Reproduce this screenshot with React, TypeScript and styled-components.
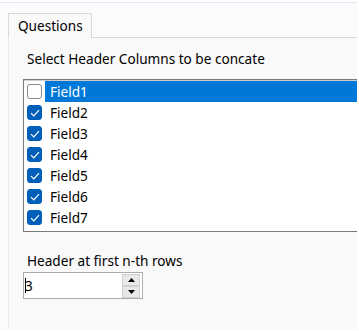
import React from "react";
import styled, { createGlobalStyle } from "styled-components";

const GlobalStyle = createGlobalStyle`
  body {
    margin: 0;
    background: #ffffff;
    font-family: "Noto Sans", "Open Sans", sans-serif;
  }
`;

const Screen = styled.div`
  width: 359px;
  height: 331px;
  overflow: hidden;
  background: #ffffff;
`;

const Window = styled.div`
  width: 357px;
  height: 327px;
  margin-top: 2px;
  border-top: 1px solid #e1e6ee;
  background: #fafbfd;
  display: flex;
  flex-direction: column;
`;

const TabStrip = styled.div`
  height: 34px;
  padding-left: 8px;
  display: flex;
  align-items: flex-end;
  position: relative;
  z-index: 1;
`;

const Tab = styled.div`
  box-sizing: border-box;
  width: 84px;
  height: 25px;
  margin-bottom: -1px;
  padding-left: 9px;
  border: 1px solid #d9d9d9;
  border-bottom: none;
  background: #f9f9f9;
  font-size: 13.6px;
  line-height: 23px;
  color: #000;
`;

const Panel = styled.div`
  flex: 1;
  margin-left: 8px;
  margin-bottom: 2px;
  border-top: 1px solid #d9d9d9;
  border-left: 1px solid #ececec;
  background: #f9f9f9;
  padding: 12px 0 0 14px;
  overflow: hidden;
  display: flex;
  flex-direction: column;
`;

const Label = styled.div<{ $top?: number }>`
  margin-left: 4px;
  margin-top: ${(p) => p.$top || 0}px;
  font-size: 13.6px;
  line-height: 18px;
  color: #000;
  white-space: nowrap;
`;

const ListBox = styled.div`
  box-sizing: border-box;
  width: 345px;
  height: 153px;
  margin-top: 11px;
  padding-top: 1px;
  border: 1px solid #7a7a7a;
  box-shadow: inset 0 1px 0 #cfcfcf;
  background: #ffffff;
  flex-shrink: 0;
`;

const Row = styled.div`
  height: 21px;
  display: flex;
  align-items: center;
`;

const Box = styled.div<{ $checked: boolean }>`
  box-sizing: border-box;
  width: 15px;
  height: 15px;
  margin-left: 3px;
  border-radius: 3px;
  border: 1px solid ${(p) => (p.$checked ? "#005fb8" : "#8a8a8a")};
  background: ${(p) => (p.$checked ? "#005fb8" : "#fdfdfd")};
  display: flex;
  align-items: center;
  justify-content: center;
`;

const ItemText = styled.div<{ $selected: boolean }>`
  flex: 1;
  height: 21px;
  margin-left: 3px;
  padding-left: 5px;
  font-size: 13.6px;
  line-height: 21px;
  color: ${(p) => (p.$selected ? "#ffffff" : "#000000")};
  background: ${(p) => (p.$selected ? "#0078d7" : "transparent")};
`;

const SpinBox = styled.div`
  box-sizing: border-box;
  width: 120px;
  height: 27px;
  margin-top: 2px;
  border: 1px solid #acacac;
  background: #ffffff;
  display: flex;
  align-items: center;
  padding: 1px 2px 1px 1px;
`;

const SpinValue = styled.div`
  flex: 1;
  display: flex;
  align-items: center;
  font-size: 13.6px;
  color: #000;
`;

const Caret = styled.span`
  width: 1px;
  height: 15px;
  background: #000;
  margin-right: -1px;
`;

const SpinButtons = styled.div`
  width: 18px;
  height: 24px;
  display: flex;
  flex-direction: column;
`;

const SpinButton = styled.div`
  box-sizing: border-box;
  flex: 1;
  border: 1px solid #d0d0d0;
  background: #e8e8e8;
  display: flex;
  align-items: center;
  justify-content: center;
`;

const fields = ["Field1", "Field2", "Field3", "Field4", "Field5", "Field6", "Field7"];

const Check = () => (
  <svg width="10" height="8" viewBox="0 0 10 8">
    <path d="M1 4.2 L3.8 7 L9 1.2" fill="none" stroke="#ffffff" strokeWidth="1.2" />
  </svg>
);

const Arrow = ({ up }: { up?: boolean }) => (
  <svg width="7" height="4" viewBox="0 0 7 4">
    <path d={up ? "M0 4 L3.5 0 L7 4 Z" : "M0 0 L3.5 4 L7 0 Z"} fill="#000" />
  </svg>
);

const App = () => {
  const [checked, setChecked] = React.useState(fields.map((_, i) => i > 0));
  return (
    <Screen>
      <GlobalStyle />
      <Window>
        <TabStrip>
          <Tab>Questions</Tab>
        </TabStrip>
        <Panel>
          <Label>Select Header Columns to be concate</Label>
          <ListBox>
            {fields.map((f, i) => (
              <Row
                key={f}
                onClick={() =>
                  setChecked(checked.map((c, j) => (j === i ? !c : c)))
                }
              >
                <Box $checked={checked[i]}>{checked[i] && <Check />}</Box>
                <ItemText $selected={i === 0}>{f}</ItemText>
              </Row>
            ))}
          </ListBox>
          <Label $top={20}>Header at first n-th rows</Label>
          <SpinBox>
            <SpinValue>
              <Caret />3
            </SpinValue>
            <SpinButtons>
              <SpinButton>
                <Arrow up />
              </SpinButton>
              <SpinButton>
                <Arrow />
              </SpinButton>
            </SpinButtons>
          </SpinBox>
        </Panel>
      </Window>
    </Screen>
  );
};

export default App;
